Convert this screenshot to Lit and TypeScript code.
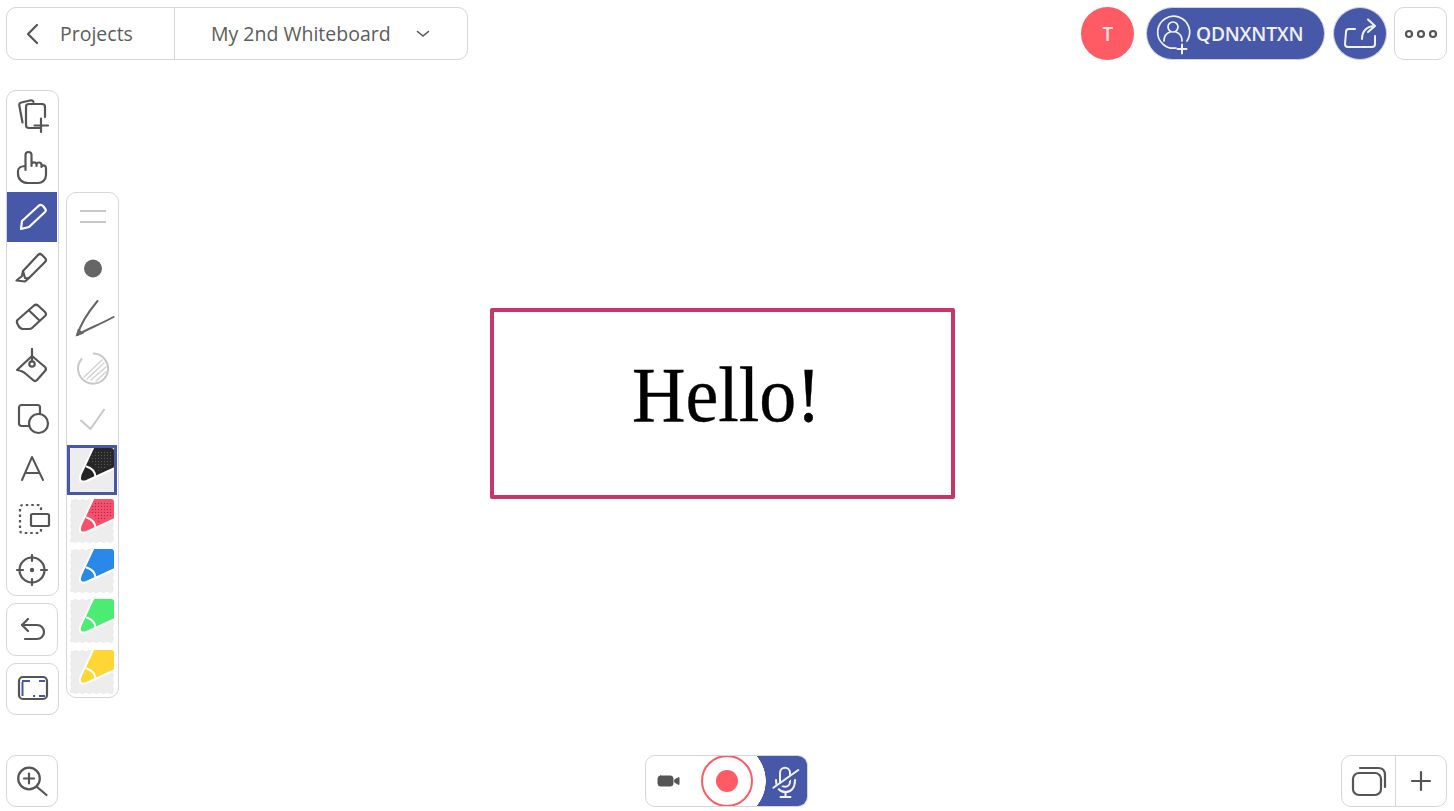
import { LitElement, html, css, svg } from "lit";
import { customElement } from "lit/decorators.js";

const toolIcons = [
  svg`<path d="M28 32H17a3 3 0 0 1-3-3V11a3 3 0 0 1 3-3h13a3 3 0 0 1 3 3v10"/><path d="M10.500 26.500 7.300 9.500a2.500 2.500 0 0 1 2-3L19 4.300a2.500 2.500 0 0 1 2.500 1.700"/><path d="M29 22.500v13.500M22.500 29.500h13.500"/>`,
  svg`<path d="M13.500 23V8a3 3 0 0 1 6 0v11M19.500 17a2.700 2.700 0 0 1 5 0v2M24.500 18a2.500 2.500 0 0 1 5 0v2M29.500 19.500a2.500 2.500 0 0 1 4.500 1.500v7c0 5-4 8-8 8h-10C10 36 6 32 6 27v-3c0-3 3-5 7.500-5"/>`,
  svg`<path class="w" d="M9 32l1-8L27 8.500q2-1.500 4 .5l2 2.500q1.500 2 0 3.500L17 30z"/>`,
  svg`<path d="M11 24 26 8q2-2 4 0l3 3q2 2 0 4L18 30q-2 2-5 1z"/><path d="M11 24l-1 5-5.500 4.500 8.500 1 4-3.500"/>`,
  svg`<path d="M5.500 22 22 7.500q2-1.500 4 0l7 6.500q2 2 0 4L20 30q-1 1-3 1h-6q-3 0-5-4-2-3-.5-5z"/><path d="M17 12.500 27 22"/>`,
  svg`<path d="M20 8l13 11q2 2 0 4l-8 9q-2 2-4 0l-7-6q-3-3-9-4z"/><path d="M20 1v12"/><circle cx="20" cy="16" r="2.700"/>`,
  svg`<rect x="7" y="6" width="21" height="21" rx="2.500"/><circle class="f" cx="26.500" cy="24.500" r="9.500"/>`,
  svg`<path class="t" d="M10 31 20 8l11 23M13.500 24h14"/>`,
  svg`<path class="d" d="M29 30v1q0 3-3 3H11q-3 0-3-3V9q0-3 3-3h15q3 0 3 3v3"/><rect x="19" y="15" width="18" height="12" rx="1.500"/>`,
  svg`<circle cx="20" cy="20" r="12.500"/><path d="M20 5v6M20 29v6M5 20h6M29 20h6"/><circle class="s" cx="20" cy="20" r="2.200"/>`,
];

const undoIcon = svg`<path d="M16 9l-6 6 6 6"/><path d="M10 15h15a7 7 0 0 1 0 14H13"/>`;
const frameIcon = svg`<rect x="6" y="8" width="28" height="22" rx="4"/><path class="b" d="M9.500 13v14M9 12h8M26 12h6M26 27h6M20 27h2"/>`;
const zoomIcon = svg`<circle cx="17" cy="17.500" r="10.800"/><path d="M25 26 34.500 34M17 12.500v10M12 17.500h10"/>`;

const panelIcons = [
  { w: 26, h: 28, g: svg`<path class="l" d="M0 7h26M0 18h26"/>` },
  { w: 26, h: 38, g: svg`<circle class="s2" cx="13" cy="18.500" r="9"/>` },
  {
    w: 44,
    h: 38,
    g: svg`<path class="p" d="M26.500 1C19 10 10 22 6.500 35 14 30 30 24 42.500 17"/><path class="s2" d="M4.500 36.500l2.500-8 6 5z"/>`,
  },
  {
    w: 34,
    h: 38,
    g: svg`<path class="l" d="M17 3.600A15 15 0 1 1 6 8.500"/><path class="h" d="M8 27 26 10M11 29 28 13M15 30 30 17M20 31 30 22"/>`,
  },
  { w: 26, h: 38, g: svg`<path class="l" d="M.5 19l10 9 14-20"/>` },
];

const swatches = [
  { c: "#262626", dots: "#555" },
  { c: "#f7516a", dots: "#a52a60" },
  { c: "#2a88e8", dots: "" },
  { c: "#4aec72", dots: "" },
  { c: "#ffd633", dots: "" },
];

@customElement("app-root")
export class AppRoot extends LitElement {
  static styles = css`
    :host {
      display: block;
      font-family: "Open Sans", "Noto Sans", sans-serif;
      color: #555;
    }
    * { box-sizing: border-box; }
    .page {
      position: relative;
      width: 1454px;
      height: 811px;
      background: #fff;
      padding: 7px 7px 4px 6px;
      display: flex;
      flex-direction: column;
      overflow: hidden;
    }
    .card {
      border: 1px solid #d5d5de;
      border-radius: 10px;
      background: #fff;
    }
    svg { display: block; fill: none; stroke: #555; stroke-width: 2.200; stroke-linecap: round; stroke-linejoin: round; }
    svg .w { stroke: #fff; }
    svg .f { fill: #fff; }
    svg .s { fill: #555; stroke: none; }
    svg .s2 { fill: #666; stroke: none; }
    svg .t { stroke-width: 2; }
    svg .d { stroke-dasharray: 2.500 3; stroke-linecap: butt; }
    svg .b { stroke: #4858a8; stroke-width: 2; stroke-linecap: butt; }
    svg .l { stroke: #c8c8c8; stroke-width: 2; stroke-linecap: butt; }
    svg .h { stroke: #d2d2d2; stroke-width: 1.500; }
    svg .p { stroke: #666; stroke-width: 2; }

    .top { display: flex; justify-content: space-between; height: 53px; flex: none; }
    .crumb { display: flex; width: 462px; font-size: 19.500px; color: #5c5c5c; }
    .back { width: 168px; display: flex; align-items: center; border-right: 1px solid #d5d5de; padding-left: 15px; gap: 18px; }
    .title { flex: 1; display: flex; align-items: center; padding-left: 36px; gap: 25px; }
    .actions { display: flex; align-items: center; }
    .avatar {
      width: 53px; height: 53px; border-radius: 50%; background: #ff5b64;
      color: #f6e3e6; font-weight: 600; font-size: 19px; display: flex; align-items: center; justify-content: center;
      margin-right: 12px;
    }
    .pill {
      width: 179px; height: 53px; border-radius: 27px; background: #4858a8; color: #eef0f8;
      border: 1px solid #cfd3e6;
      font-weight: 600; font-size: 19.200px; display: flex; align-items: center; padding-left: 8px; gap: 1px;
      margin-right: 8px; letter-spacing: -.2px;
    }
    .share {
      width: 54px; height: 53px; border-radius: 50%; background: #4858a8; border: 1px solid #cfd3e6;
      display: flex; align-items: center; justify-content: center; margin-right: 7px;
    }
    .more { width: 53px; height: 53px; display: flex; align-items: center; justify-content: center; }
    .light { stroke: #f2f3fa; stroke-width: 2; }
    .thin { stroke: #f2f3fa; stroke-width: 1.700; }
    .gap { stroke: #4858a8; stroke-width: 4; }

    .middle { flex: 1; display: flex; align-items: flex-start; padding-top: 30px; }
    .rail { display: flex; flex-direction: column; gap: 7px; width: 53px; }
    .tools { height: 506px; display: flex; flex-direction: column; overflow: hidden; padding: 0; }
    .tool { flex: 1; display: flex; align-items: center; justify-content: center; margin-right: 1px; }
    .tool.on { background: #4858a8; }
    .single { height: 53px; width: 52px; display: flex; align-items: center; justify-content: center; }
    .single.frame { height: 52px; width: 53px; }
    .panel {
      margin: 102px 0 0 7px; width: 53px; height: 506px; display: flex; flex-direction: column;
    }
    .opt { flex: 1; display: flex; align-items: center; justify-content: center; }
    .sw { flex: 1; display: flex; align-items: center; justify-content: center; margin-right: 1px; }
    .sw.on { outline: 3px solid #4858a8; outline-offset: -3px; }

    .bottom { flex: none; height: 52px; display: grid; grid-template-columns: 1fr auto 1fr; align-items: stretch; }
    .zoom { width: 52px; display: flex; align-items: center; justify-content: center; }
    .rec { width: 163px; display: flex; overflow: hidden; }
    .cam { width: 55px; display: flex; align-items: center; justify-content: center; padding-right: 10px; }
    .ring {
      width: 52px; height: 52px; margin: -1px 0; flex: none; border: 2px solid #ff5b64; border-radius: 50%;
      display: flex; align-items: center; justify-content: center;
    }
    .ring span { width: 22px; height: 22px; border-radius: 50%; background: #ff5b64; }
    .mic {
      flex: 1; display: flex; align-items: center; justify-content: center; padding-left: 10px;
      background: radial-gradient(circle 39px at -26px 50%, #fff 38.500px, #4858a8 39px);
    }
    .pages { justify-self: end; width: 106px; display: flex; }
    .pages > div { display: flex; align-items: center; justify-content: center; }
    .pages > div:first-child { width: 54px; border-right: 1px solid #d5d5de; }
    .pages > div:last-child { flex: 1; }

    .box {
      position: absolute; left: 490px; top: 308px; width: 465px; height: 191px;
      border: 4px solid #c9356b; border-radius: 2px;
      display: flex; align-items: center; justify-content: center;
      font-family: "Liberation Serif", serif; font-size: 74px; color: #000;
      padding: 0 0 16px 8px;
    }
    .box span { display: block; transform: scaleY(1.05); -webkit-text-stroke: .35px #000; }
  `;

  private icon(i: unknown) {
    return html`<svg width="40" height="40" viewBox="0 0 40 40">${i}</svg>`;
  }

  private swatch(s: { c: string; dots: string }, i: number) {
    const on = i === 0;
    return html`<div class="sw ${on ? "on" : ""}">
      <svg width="44" height="44" viewBox="0 0 44 44" style="stroke:none">
        <defs>
          <pattern id="dots${i}" width="3" height="3" patternUnits="userSpaceOnUse">
            <circle cx="1.500" cy="1.500" r=".7" fill=${s.dots || "none"}></circle>
          </pattern>
          <clipPath id="sq${i}"><rect width="44" height="44" rx="3"></rect></clipPath>
        </defs>
        <g clip-path="url(#sq${i})">
          <rect width="44" height="44" fill="#ededed"></rect>
          ${on ? "" : svg`<rect x=".5" y=".5" width="43" height="43" fill="none" stroke="#fff" stroke-width="1" stroke-dasharray="3 4"></rect>`}
          <path d="M24 -2H46V19.500L16.500 33Q9.500 35 10 30 10 27 11.500 24.500z" fill=${s.c} stroke="#fff" stroke-width="2" stroke-linejoin="round"></path>
          ${s.dots ? svg`<path d="M25 2H42V17L27 24Q26 15 19 14z" fill="url(#dots${i})" stroke="none"></path>` : ""}
          <path d="M16.500 18.500Q25 21 25.500 29" fill="none" stroke="#fff" stroke-width="2"></path>
        </g>
      </svg>
    </div>`;
  }

  render() {
    return html`<div class="page">
      <div class="top">
        <div class="card crumb">
          <div class="back">
            <svg width="20" height="24" viewBox="0 0 20 24"><path d="M15 3 6 12l9 9"/></svg>
            <span>Projects</span>
          </div>
          <div class="title">
            <span>My 2nd Whiteboard</span>
            <svg width="14" height="8" viewBox="0 0 14 8"><path d="M1.500 1.500 7 6l5.500-4.500" stroke-width="1.600"/></svg>
          </div>
        </div>
        <div class="actions">
          <div class="avatar">T</div>
          <div class="pill">
            <svg width="40" height="48" viewBox="0 0 40 48">
              <path class="thin" d="M32 31A16 16 0 1 0 21 38"/>
              <circle class="thin" cx="18" cy="17" r="5"/>
              <path class="thin" d="M9 31c0-6 3-8 6-9M27 31c0-6-3-8-6-9"/>
              <path class="light" d="M22.500 39h9M27 34.500v9"/>
            </svg>
            <span>QDNXNTXN</span>
          </div>
          <div class="share">
            <svg width="36" height="36" viewBox="0 0 36 36">
              <path class="light" d="M13 13H7a3 3 0 0 0-3 3L3 28a3 3 0 0 0 3 3h24a3 3 0 0 0 3-3V20"/>
              <path class="light" d="M20 23c0-8 5-13 13-13M26 3.500l7 6.500-7 6"/>
            </svg>
          </div>
          <div class="card more">
            <svg width="36" height="10" viewBox="0 0 36 10">
              <circle cx="6" cy="5" r="3"/><circle cx="18" cy="5" r="3"/><circle cx="30" cy="5" r="3"/>
            </svg>
          </div>
        </div>
      </div>

      <div class="middle">
        <div class="rail">
          <div class="card tools">
            ${toolIcons.map((t, i) => html`<div class="tool ${i === 2 ? "on" : ""}">${this.icon(t)}</div>`)}
          </div>
          <div class="card single">${this.icon(undoIcon)}</div>
          <div class="card single frame">${this.icon(frameIcon)}</div>
        </div>
        <div class="card panel">
          ${panelIcons.map(
            (p) => html`<div class="opt">
              <svg width=${p.w} height=${p.h} viewBox="0 0 ${p.w} ${p.h}">${p.g}</svg>
            </div>`
          )}
          ${swatches.map((s, i) => this.swatch(s, i))}
        </div>
      </div>

      <div class="bottom">
        <div class="card zoom">${this.icon(zoomIcon)}</div>
        <div class="card rec">
          <div class="cam">
            <svg width="24" height="14" viewBox="0 0 24 14">
              <rect x="1" y="2" width="15" height="10" rx="2.500" style="fill:#555;stroke:#555;stroke-width:1"/>
              <path d="M18 5.500l4-2v7l-4-2z" style="fill:#555;stroke:#555;stroke-width:1"/>
            </svg>
          </div>
          <div class="ring"><span></span></div>
          <div class="mic">
            <svg width="30" height="36" viewBox="0 0 30 36">
              <rect class="light" x="10" y="4.700" width="10" height="19" rx="5"/>
              <path class="light" d="M6 17c0 8 4 12 9.500 12s9.500-4 9.500-12M15.500 29v5M10.500 34h10"/>
              <path class="gap" d="M4 26 29 8.500"/>
              <path class="light" d="M3.300 24.700 28.300 7"/>
            </svg>
          </div>
        </div>
        <div class="card pages">
          <div>
            <svg width="38" height="34" viewBox="0 0 38 34">
              <rect x="3" y="9" width="28" height="22" rx="6" />
              <path d="M10 4h18q7 0 7 7v12" />
            </svg>
          </div>
          <div>
            <svg width="22" height="22" viewBox="0 0 22 22"><path d="M11 2v18M2 11h18" /></svg>
          </div>
        </div>
      </div>

      <div class="box"><span>Hello!</span></div>
    </div>`;
  }
}
